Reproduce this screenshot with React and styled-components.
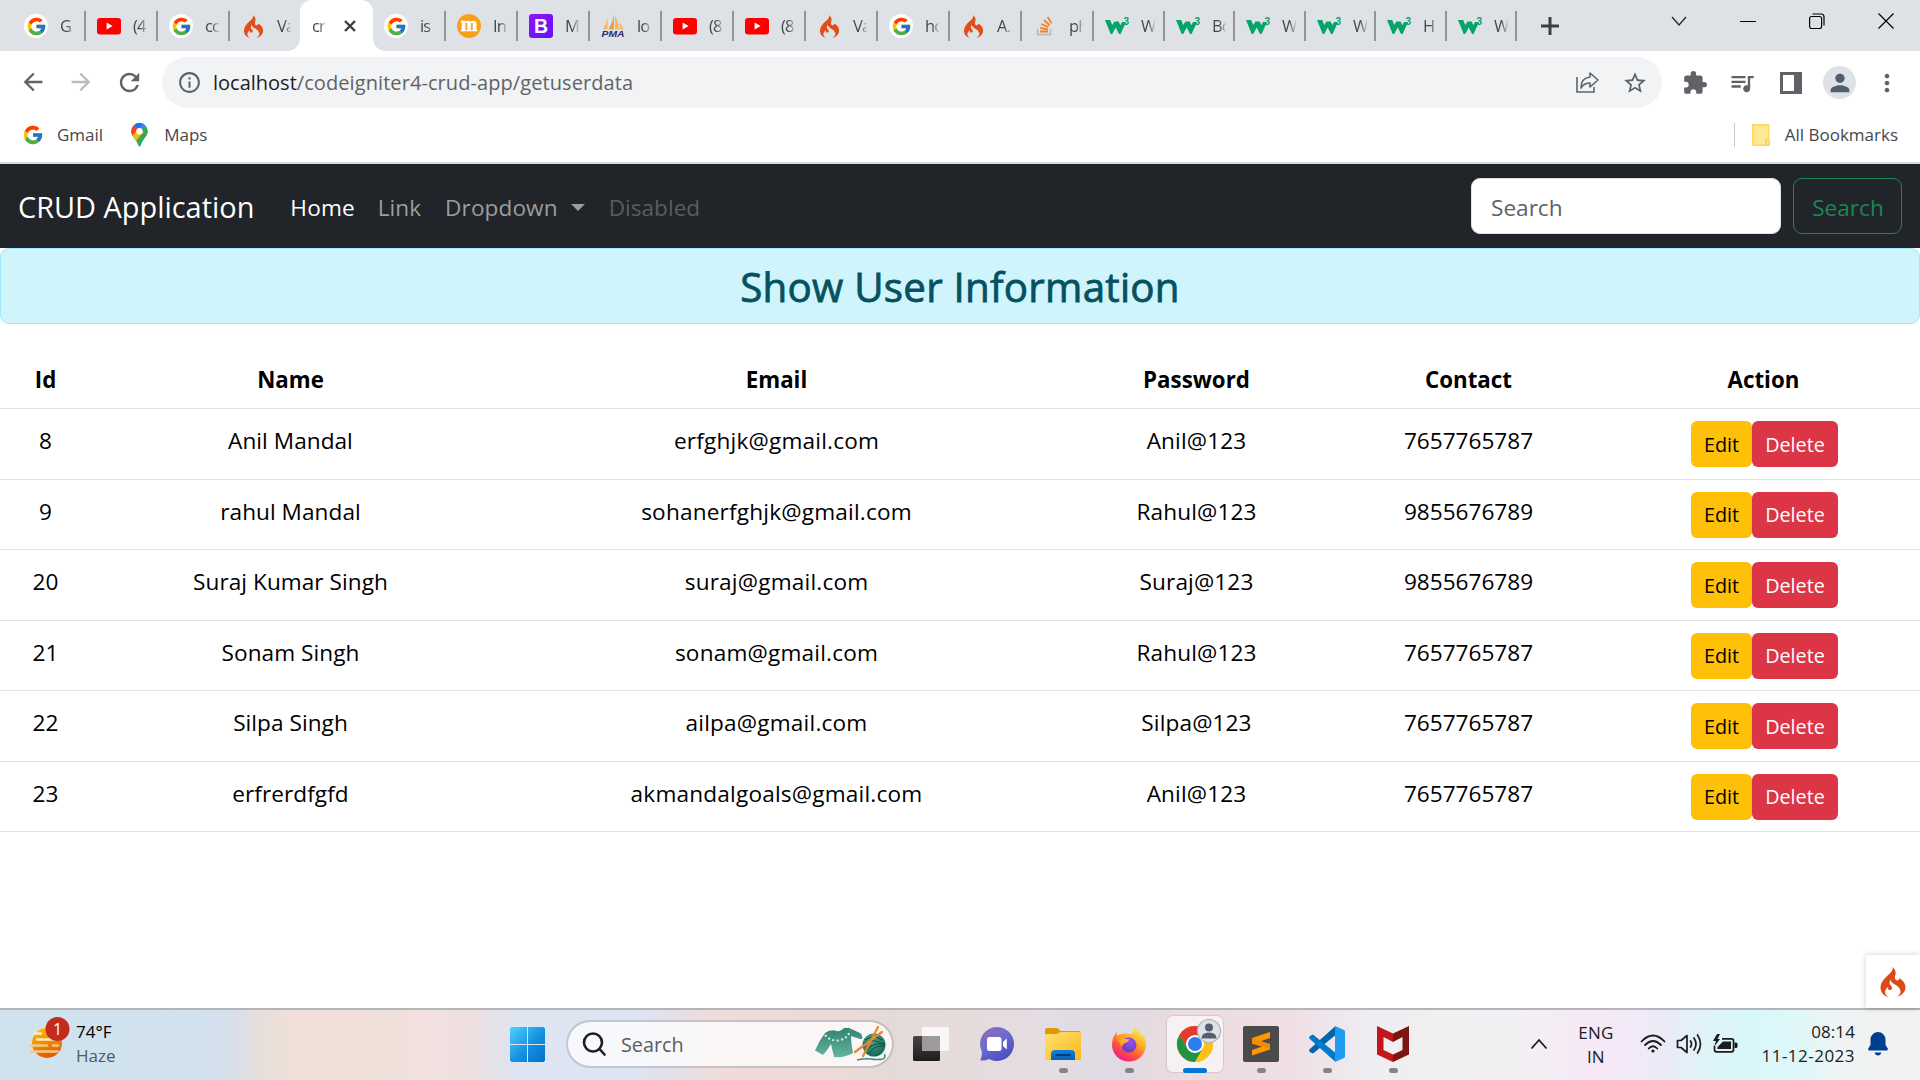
import React from "react";
import styled, { createGlobalStyle } from "styled-components";
import {
  MdArrowBack, MdArrowForward, MdRefresh, MdInfoOutline, MdStarBorder,
  MdExtension, MdQueueMusic, MdPerson, MdMoreVert,
} from "react-icons/md";
import { FcGoogle } from "react-icons/fc";
import { SiCodeigniter } from "react-icons/si";

const GlobalStyle = createGlobalStyle`
  * { box-sizing: border-box; }
  html, body { margin: 0; padding: 0; background: #fff; overflow: hidden; }
  body { font-family: "Open Sans", "Noto Sans", sans-serif; }
  svg { display: block; flex: none; }
`;

const Screen = styled.div`
  width: 1920px;
  height: 1080px;
  display: flex;
  flex-direction: column;
  overflow: hidden;
  background: #fff;
`;

const Label = styled.span`
  font-size: ${(p) => p.$size}px;
  font-weight: ${(p) => p.$weight || 400};
  letter-spacing: ${(p) => p.$track || 0}px;
  color: ${(p) => p.$color || "inherit"};
  margin-left: ${(p) => p.$ml || 0}px;
  padding-top: ${(p) => p.$drop || 0}px;
  white-space: pre;
`;

/* ---------- Tab strip ---------- */

const TabStrip = styled.div`
  height: 51px;
  flex: none;
  display: flex;
  background: #dee1e6;
  padding-left: 13px;
`;

const Tab = styled.div`
  width: ${(p) => p.$w}px;
  height: 51px;
  flex: none;
  display: flex;
  align-items: center;
  gap: 12px;
  padding: 1px 0 0 11px;
`;

const Divider = styled.i`
  width: 2px;
  height: 30px;
  margin-left: auto;
  background: #919499;
`;

const TabTitle = styled.span`
  width: 14px;
  overflow: hidden;
  white-space: nowrap;
  font-size: 16.5px;
  letter-spacing: -0.8px;
  line-height: 30px;
  color: #45484d;
  mask-image: linear-gradient(90deg, #000 50%, rgba(0, 0, 0, 0.15) 100%);
  margin-right: ${(p) => (p.$active ? -1 : -12)}px;
`;

const ActiveTab = styled.div`
  width: 73px;
  height: 51px;
  flex: none;
  display: flex;
  align-items: center;
  gap: 19px;
  margin-left: -2px;
  padding: 1px 0 0 12px;
  background: #fff;
  border-radius: 12px 12px 0 0;
  position: relative;
  &::before,
  &::after {
    content: "";
    position: absolute;
    bottom: 0;
    width: 12px;
    height: 12px;
  }
  &::before {
    left: -12px;
    background: radial-gradient(circle at 0 0, transparent 11.5px, #fff 12px);
  }
  &::after {
    right: -12px;
    background: radial-gradient(circle at 100% 0, transparent 11.5px, #fff 12px);
  }
`;

const NewTab = styled.div`
  display: flex;
  align-items: center;
  padding-left: 24px;
`;

const WindowButtons = styled.div`
  margin-left: auto;
  display: flex;
  height: 42px;
  align-items: center;
  gap: 53px;
  padding-right: 26px;
`;

const Disc = styled.div`
  width: 24px;
  height: 24px;
  flex: none;
  border-radius: 50%;
  background: #fff;
  display: flex;
  align-items: center;
  justify-content: center;
`;

const Slot = styled.div`
  width: 24px;
  height: 24px;
  flex: none;
  display: flex;
  align-items: center;
  justify-content: center;
`;

const YouTube = () => (
  <svg width="24" height="24" viewBox="0 0 24 24">
    <rect x="0" y="4" width="24" height="16.4" rx="3" fill="#f00" />
    <path d="M9.6 8.6v7l6-3.5z" fill="#fff" />
  </svg>
);
const Moodle = () => (
  <svg width="24" height="24" viewBox="0 0 24 24">
    <circle cx="12" cy="12" r="12" fill="#f9a01b" />
    <text x="12" y="17" textAnchor="middle" fontFamily="Liberation Serif, serif" fontWeight="700" fontSize="20" fill="#fff" stroke="#fff" strokeWidth=".6">m</text>
  </svg>
);
const Bootstrap = () => (
  <svg width="24" height="24" viewBox="0 0 24 24">
    <defs><linearGradient id="bs" x1="0" y1="0" x2="1" y2="1"><stop offset="0" stopColor="#9013fe" /><stop offset="1" stopColor="#6610f2" /></linearGradient></defs>
    <rect width="24" height="24" rx="3" fill="url(#bs)" />
    <text x="12" y="19" textAnchor="middle" fontFamily="Liberation Sans, sans-serif" fontWeight="700" fontSize="19.5" fill="#fff">B</text>
  </svg>
);
const PhpMyAdmin = () => (
  <svg width="24" height="24" viewBox="0 0 24 24">
    <path d="M2 15.500Q5.500 10 6.500 3v12z" fill="#f9b45c" />
    <path d="M7.500 15.300Q12 8 13 .5v15z" fill="#f89c2a" />
    <path d="M14 15.200V1q3 7 4.500 14.600zM18.500 8q2.500 3 4 8l-3-.5z" fill="#fbb55a" />
    <text x="12" y="22.700" textAnchor="middle" fontFamily="Liberation Sans, sans-serif" fontWeight="700" fontStyle="italic" fontSize="9" textLength="23" lengthAdjust="spacingAndGlyphs" fill="#2c2c6c">PMA</text>
  </svg>
);
const W3 = () => (
  <svg width="24" height="24" viewBox="0 0 24 24">
    <path d="M0 6h5.200l2 5 2.300-3.500h4.200l1.600 3.700 1.700-3.200h4L15.600 20h-1.500l-3.400-6.500-3.500 6.500H5.700z" fill="#04a36a" />
    <text x="21.300" y="10.500" textAnchor="middle" fontFamily="Liberation Sans, sans-serif" fontWeight="700" fontSize="10" fill="#04a36a">3</text>
  </svg>
);
const Google = () => <Disc><FcGoogle size={21} /></Disc>;
const Flame = () => <Slot><SiCodeigniter size={23} color="#e04e1c" /></Slot>;
const Stack = () => (
  <Slot>
    <svg width="18" height="20" viewBox="0 0 18 20" fill="none">
      <path d="M1.500 13v5.600h13V13" stroke="#bcbbbb" strokeWidth="1.800" />
      <path d="M4 15.500h8M4.200 12l7.800 1.400M5.300 8l7.200 3.200M8 4.200l5.800 5M11.600 1l4 6.200" stroke="#f48024" strokeWidth="1.800" />
    </svg>
  </Slot>
);

const tabIcons = { g: Google, y: YouTube, f: Flame, m: Moodle, b: Bootstrap, p: PhpMyAdmin, s: Stack, w: W3 };

const tabsBefore = [["g", "G", 73], ["y", "(4", 72], ["g", "co", 72], ["f", "Va", 72]];
const tabsAfter = [
  ["g", "is", 73], ["m", "In", 72], ["b", "M", 72], ["p", "lo", 72], ["y", "(8", 72], ["y", "(8", 72],
  ["f", "Va", 72], ["g", "ho", 72], ["f", "A.", 72], ["s", "ph", 72], ["w", "W", 71], ["w", "Bo", 70],
  ["w", "W", 71], ["w", "W", 70], ["w", "H", 71], ["w", "W", 70],
];

const BrowserTab = ({ icon, title, width, divided = true }) => {
  const Icon = tabIcons[icon];
  return (
    <Tab $w={width}>
      <Icon />
      <TabTitle>{title}</TabTitle>
      {divided && <Divider />}
    </Tab>
  );
};

/* ---------- Toolbar ---------- */

const Toolbar = styled.div`
  height: 63px;
  flex: none;
  display: flex;
  align-items: center;
  padding-left: 19px;
  color: #5f6368;
`;

const NavIcons = styled.div`
  display: flex;
  width: 143px;
  gap: 20px;
`;

const Omnibox = styled.div`
  width: 1500px;
  height: 51px;
  border-radius: 26px;
  background: #f1f3f4;
  display: flex;
  align-items: center;
  padding: 0 14px 0 15px;
`;

const OmniActions = styled.div`
  margin-left: auto;
  display: flex;
  gap: 22px;
  align-items: center;
`;

const Extensions = styled.div`
  display: flex;
  align-items: center;
  margin-left: 20px;
`;

const SidePanelIcon = styled.svg`
  margin: 0 21px 0 24px;
`;

const Playlist = styled(MdQueueMusic)`
  margin-left: 20px;
`;

const Avatar = styled.div`
  width: 33px;
  height: 33px;
  margin-right: 17px;
  border-radius: 50%;
  background: #dee1e6;
  display: flex;
  align-items: center;
  justify-content: center;
`;

const BookmarkBar = styled.div`
  height: 50px;
  flex: none;
  display: flex;
  align-items: center;
  padding: 0 22px 7px 22px;
  border-bottom: 2px solid #dadce0;
  color: #45484d;
`;

const Bookmark = styled.div`
  display: flex;
  align-items: center;
  gap: ${(p) => p.$gap || 13}px;
  margin-right: 28px;
  &:last-child { margin-right: 0; }
`;

const BookmarkDivider = styled.i`
  width: 1px;
  height: 24px;
  background: #c8cacd;
  margin: 0 17px 0 auto;
`;

const MapsPin = () => (
  <svg width="17" height="24" viewBox="0 0 17 24">
    <defs><clipPath id="pin"><path d="M8.5 0a8.3 8.3 0 0 1 8.3 8.3c0 5-5.3 7.700-7.100 14.200q-.3 1.100-1.200 1.100t-1.200-1.100C5.500 16 .2 13.300.2 8.300A8.300 8.300 0 0 1 8.500 0z" /></clipPath></defs>
    <g clipPath="url(#pin)">
      <rect width="17" height="24" fill="#34a853" />
      <path d="M3 2 8.500 8.500 15 0H3z" fill="#1a73e8" />
      <path d="M-1 0 3 2.300 8 7 2 14-2 14z" fill="#ea4335" />
      <path d="M1 13 8.500 4.500 12.500 9 4.500 18.500z" fill="#fbbc04" />
      <path d="M8.500 8.500 11 0h7L11.500 6z" fill="#4285f4" />
    </g>
    <circle cx="8.500" cy="8.300" r="3.200" fill="#fff" />
  </svg>
);

/* ---------- Page ---------- */

const Page = styled.main`
  height: 844px;
  flex: none;
  position: relative;
  background: #fff;
`;

const Navbar = styled.nav`
  height: 84px;
  display: flex;
  align-items: center;
  background: #212529;
  padding: 0 18px;
`;

const Caret = styled.i`
  margin: 2px 0 0 13px;
  border-top: 7.5px solid #9b9d9e;
  border-left: 7.5px solid transparent;
  border-right: 7.5px solid transparent;
`;

const SearchForm = styled.form`
  margin-left: auto;
  display: flex;
  gap: 12px;
`;

const SearchField = styled.div`
  width: 310px;
  height: 56px;
  border-radius: 9px;
  border: 1px solid #dee2e6;
  background: #fff;
  display: flex;
  align-items: center;
  padding-left: 19px;
`;

const SearchButton = styled.button`
  width: 109px;
  height: 56px;
  border-radius: 9px;
  border: 1px solid #198754;
  background: transparent;
  padding: 2px 0 0 1px;
  font-family: inherit;
`;

const Alert = styled.div`
  height: 76px;
  margin-bottom: 24px;
  display: flex;
  justify-content: center;
  align-items: center;
  padding-top: 1px;
  background: #cff4fc;
  border: 1px solid #9eeaf9;
  border-radius: 9px;
`;

const Heading = styled.h3`
  margin: 0;
  font-size: 40.3px;
  font-weight: 400;
  letter-spacing: 0.25px;
  color: #055160;
  -webkit-text-stroke: 0.8px #055160;
`;

const Row = styled.div`
  height: ${(p) => (p.$head ? 61 : 70.5)}px;
  display: grid;
  grid-template-columns: 90px 400px 572px 268px 276px 314px;
  border-bottom: 1px solid #dee2e6;
  color: #000;
`;

const Cell = styled.div`
  padding-top: ${(p) => (p.$action ? 12 : 14)}px;
  padding-left: ${(p) => (p.$action ? 3 : 1)}px;
  display: flex;
  justify-content: center;
  align-items: flex-start;
  line-height: 36px;
`;

const ActionButton = styled.button`
  width: ${(p) => (p.$danger ? 86 : 61)}px;
  height: 46px;
  border: 0;
  border-radius: 6px;
  padding: 0;
  font-family: inherit;
  background: ${(p) => (p.$danger ? "#dc3545" : "#ffc107")};
  color: ${(p) => (p.$danger ? "#fff" : "#000")};
`;

const DebugBar = styled.div`
  position: absolute;
  right: 0;
  bottom: 0;
  width: 54px;
  height: 53px;
  background: #fff;
  box-shadow: 0 0 6px rgba(0, 0, 0, 0.2);
  display: flex;
  align-items: center;
  justify-content: center;
`;

const tracking = [0, 0.05, 0.19, 0.13, 0];

const rows = [
  ["8", "Anil Mandal", "erfghjk@gmail.com", "Anil@123", "7657765787"],
  ["9", "rahul Mandal", "sohanerfghjk@gmail.com", "Rahul@123", "9855676789"],
  ["20", "Suraj Kumar Singh", "suraj@gmail.com", "Suraj@123", "9855676789"],
  ["21", "Sonam Singh", "sonam@gmail.com", "Rahul@123", "7657765787"],
  ["22", "Silpa Singh", "ailpa@gmail.com", "Silpa@123", "7657765787"],
  ["23", "erfrerdfgfd", "akmandalgoals@gmail.com", "Anil@123", "7657765787"],
];

/* ---------- Taskbar ---------- */

const Taskbar = styled.footer`
  height: 72px;
  flex: none;
  display: flex;
  border-top: 2px solid #b4b5b8;
  background: linear-gradient(90deg, #cfe2ee 0, #d2e2ef 200px, #d7dfec 230px, #e8dedb 262px, #efdfd8 290px,
    #efe0d9 380px, #f2e0df 420px, #efe0e1 470px, #e3e2ea 500px, #dfe5f2 520px, #dde4f1 640px, #e4dfe6 680px,
    #efdcda 720px, #eddad8 830px, #e3dad9 900px, #e5dcdb 960px, #e4dde2 1050px, #dfdae4 1120px, #ebdcdf 1180px,
    #efdfe4 1290px, #eeedf3 1370px, #f0f0f0 1440px, #f3eff3 1530px, #f6e8f7 1600px, #ecebf7 1660px,
    #e0f2f8 1700px, #d8f8fb 1750px, #e0f7f8 1800px, #eff3f3 1840px, #f2f2f2 1920px);
`;

const Weather = styled.div`
  width: 510px;
  display: flex;
  padding: 6px 0 0 29px;
  gap: 5px;
`;

const Stacked = styled.div`
  display: flex;
  flex-direction: column;
  align-items: ${(p) => p.$align || "flex-start"};
  line-height: 24px;
  margin-left: ${(p) => p.$ml || 0}px;
  padding-top: ${(p) => p.$drop || 0}px;
`;

const Apps = styled.div`
  display: flex;
  align-items: center;
  height: 68px;
`;

const TaskSearch = styled.div`
  width: 328px;
  height: 48px;
  margin: 0 4px 0 21px;
  border-radius: 24px;
  border: 2px solid rgba(90, 90, 110, 0.22);
  background: rgba(255, 255, 255, 0.75);
  background-clip: padding-box;
  display: flex;
  align-items: center;
  padding: 0 4px 0 14px;
`;

const SearchArt = styled.svg`
  margin-left: auto;
`;

const AppTile = styled.div`
  width: 56px;
  height: 56px;
  margin: 0 5px;
  border-radius: 6px;
  background: ${(p) => (p.$active ? "rgba(255,255,255,.6)" : "transparent")};
  box-shadow: ${(p) => (p.$active ? "0 0 1px 1px rgba(120,100,110,.18)" : "none")};
  display: flex;
  flex-direction: column;
  align-items: center;
  padding-top: 10px;
`;

const Running = styled.i`
  width: ${(p) => (p.$active ? 24 : 9)}px;
  height: 5px;
  margin-top: 6px;
  flex: none;
  border-radius: 3px;
  background: ${(p) => (p.$active ? "#0078d4" : "#868385")};
`;

const Tray = styled.div`
  margin-left: auto;
  display: flex;
  align-items: center;
  height: 68px;
  padding-right: 32px;
  color: #1b1b1b;
`;

const TrayIcons = styled.div`
  display: flex;
  align-items: center;
  gap: 10px;
  margin: 0 23px 0 27px;
`;

const BellIcon = styled.svg`
  margin-left: 13px;
`;

const HazeIcon = () => (
  <svg width="42" height="46" viewBox="0 0 42 46">
    <defs><linearGradient id="sun" x1="0" y1="0" x2="0.3" y2="1"><stop offset="0" stopColor="#fdc50a" /><stop offset="1" stopColor="#e65c05" /></linearGradient></defs>
    <circle cx="18" cy="27" r="15" fill="url(#sun)" />
    <g strokeLinecap="round" strokeWidth="2.500" stroke="#fff0b8">
      <path d="M6 17.500h6M8 23.500h22" /><path d="M2 29.500h16M24 29.500h5M1.500 35.500h27" stroke="#f0cb85" />
    </g>
    <circle cx="28.500" cy="13" r="12" fill="#c42b1c" />
    <text x="28.500" y="18.500" textAnchor="middle" fontSize="16" fontFamily="Open Sans, sans-serif" fill="#fff">1</text>
  </svg>
);

const StartIcon = () => (
  <svg width="35" height="35" viewBox="0 0 35 35">
    <defs><linearGradient id="win" x1="0" y1="0" x2="1" y2="1"><stop offset="0" stopColor="#4fd1ff" /><stop offset=".55" stopColor="#1590e0" /><stop offset="1" stopColor="#0070cc" /></linearGradient></defs>
    <path fill="url(#win)" d="M1.500 0H17v17H0V1.500zM18 0h15.500L35 1.500V17H18zM0 18h17v17H1.500L0 33.500zM18 18h17v15.500L33.500 35H18z" />
  </svg>
);

const Knitting = () => (
  <SearchArt width="74" height="38" viewBox="0 0 74 38">
    <defs>
      <linearGradient id="knit" x1="0" y1="0" x2="0" y2="1"><stop offset="0" stopColor="#2f8472" /><stop offset="1" stopColor="#63b49c" /></linearGradient>
      <radialGradient id="yarn" cx=".4" cy=".3" r=".8"><stop offset="0" stopColor="#47a58c" /><stop offset="1" stopColor="#155f51" /></radialGradient>
    </defs>
    <path d="M11 8Q16 4 23 6q4 1 7-3l5 0 11 5q3 2 2 6h-2l-9-3q0 8 2 17-8 5-19 4l-3-13Q13 26 9 30L1 25.500Q5 16 11 8z" fill="url(#knit)" />
    <path d="M11 10q5 6 13 5.500 10-1.500 12-10" fill="none" stroke="#d8efe8" strokeWidth="2" strokeDasharray="2 2.400" />
    <circle cx="60" cy="20" r="11.500" fill="url(#yarn)" />
    <path d="M51 15q9-6 17 0M49 19q10-7 22 1M52 26q6-9 18-7M55 29q4-9 15-8" stroke="#0f5145" fill="none" />
    <path d="M43 35q8-2 14-1t12 0q3-2 1.500-5" stroke="#3c8f7e" strokeWidth="1.500" fill="none" />
    <path d="M41 27 68 7M49 31 64 2" stroke="#e9852b" strokeWidth="2.200" strokeLinecap="round" />
  </SearchArt>
);

const TaskView = () => (
  <svg width="36" height="36" viewBox="0 0 36 36">
    <defs><linearGradient id="tv" x1="0" y1="0" x2="0" y2="1"><stop offset="0" stopColor="#4a4644" /><stop offset="1" stopColor="#1d1b1b" /></linearGradient></defs>
    <rect x="0" y="10" width="27" height="25" rx="1.500" fill="url(#tv)" />
    <rect x="9" y="1" width="27" height="24" rx="1.500" fill="#fff" fillOpacity=".75" />
    <rect x="9" y="10" width="18" height="15" fill="#9c9a9a" />
  </svg>
);

const ChatIcon = () => (
  <svg width="36" height="36" viewBox="0 0 36 36">
    <defs><linearGradient id="chat" x1="0" y1="0" x2=".6" y2="1"><stop offset="0" stopColor="#9468b4" /><stop offset=".5" stopColor="#6d6cd0" /><stop offset="1" stopColor="#4a50c0" /></linearGradient></defs>
    <path d="M18 1a17 17 0 1 1-8 32q-4 2-8.600 1.500Q3 30 3 26A17 17 0 0 1 18 1z" fill="url(#chat)" />
    <rect x="8" y="11" width="14.500" height="14" rx="2.500" fill="#fff" />
    <path d="M24 16l3.800-3.500v11L24 20z" fill="#fff" />
  </svg>
);

const FolderIcon = () => (
  <svg width="36" height="36" viewBox="0 0 36 36">
    <defs><linearGradient id="fold" x1="0" y1="0" x2="1" y2="1"><stop offset="0" stopColor="#ffe070" /><stop offset="1" stopColor="#fcb81c" /></linearGradient>
      <linearGradient id="pocket" x1="0" y1="0" x2="0" y2="1"><stop offset="0" stopColor="#0c84d8" /><stop offset="1" stopColor="#0c5cb0" /></linearGradient></defs>
    <path d="M0 4q0-2 2-2h10.500l3 3H34q2 0 2 2v5H0z" fill="#dd9c06" />
    <path d="M0 8h12l3.500-2H36v26.500q0 1.500-1.500 1.500H1.500Q0 34 0 32.500z" fill="url(#fold)" />
    <path d="M6 34v-6q0-4 4-4h16q4 0 4 4v6z" fill="url(#pocket)" />
    <path d="M11 29h14" stroke="#063e7c" strokeWidth="1.800" strokeLinecap="round" />
  </svg>
);

const FirefoxIcon = () => (
  <svg width="36" height="36" viewBox="0 0 36 36">
    <defs>
      <linearGradient id="fx" x1=".85" y1=".05" x2=".25" y2="1"><stop offset="0" stopColor="#fff23f" /><stop offset=".35" stopColor="#ffb028" /><stop offset=".65" stopColor="#ff5a36" /><stop offset="1" stopColor="#f0148c" /></linearGradient>
      <radialGradient id="fxb" cx=".6" cy=".3" r=".8"><stop offset="0" stopColor="#9a4df0" /><stop offset="1" stopColor="#5a3fb8" /></radialGradient>
      <linearGradient id="fxh" x1="0" y1="0" x2="1" y2=".3"><stop offset="0" stopColor="#ff8a1e" /><stop offset="1" stopColor="#ffbf2a" /></linearGradient>
    </defs>
    <path d="M23 1q5 3 6 8 1.500 0 2-1.500 4 5 4 11.500a17 16.500 0 0 1-34 0q0-8 5-13v4q2-2 5-2 3-1.500 8 0 3 0 3.500-3 0-2 .5-4z" fill="url(#fx)" />
    <circle cx="18" cy="19" r="7.500" fill="url(#fxb)" />
    <path d="M5 12q3-4 7-3l1.500 3.500q3 1 5 .5-1 3-4.500 4-3 1.500-3 4.500-2-6-6-9.500z" fill="url(#fxh)" />
  </svg>
);

const ChromeIcon = () => (
  <svg width="48" height="36" viewBox="0 0 48 36" overflow="visible">
    <g transform="translate(6 0)">
      <circle cx="18" cy="18" r="18" fill="#fbc116" />
      <path d="M2.400 9A18 18 0 0 1 33.600 9H18L10.200 22.500z" fill="#e33b2e" />
      <path d="M2.400 9A18 18 0 0 0 18 36L25.800 22.500 10.200 22.500z" fill="#229342" />
      <path d="M33.600 9A18 18 0 0 1 18 36L25.800 22.500 18 9z" fill="#fbc116" />
      <circle cx="18" cy="18" r="9" fill="#fff" />
      <circle cx="18" cy="18" r="7" fill="#2c7df0" />
    </g>
    <circle cx="38" cy="5" r="11.500" fill="#dfe2e7" stroke="#aeb0b3" strokeWidth="1.200" />
    <circle cx="38" cy="1.500" r="4" fill="#55606f" />
    <path d="M30.500 12.500q0-6 7.500-6t7.500 6z" fill="#55606f" />
  </svg>
);

const SublimeIcon = () => (
  <svg width="36" height="36" viewBox="0 0 36 36">
    <rect width="36" height="36" rx="2" fill="#4a4a4a" />
    <path d="M9 12 27 6v6l-11 3.700L27 18v5.500L9 29.500V24l11-3.700L9 17.500z" fill="#ff9800" />
    <path d="M9 12v5.500l18 6V18z" fill="#f58d00" />
  </svg>
);

const VsCodeIcon = () => (
  <svg width="36" height="36" viewBox="0 0 36 36">
    <path d="M26 9.500 4 27.500 0.800 26q-1.300-1.500 0-3L26 0.500z" fill="#0065a9" />
    <path d="M26 26.500 4 8.500.8 10q-1.300 1.500 0 3L26 35.500z" fill="#007acc" />
    <path d="M26 0l9 4q1 .5 1 1.800v24.400q0 1.300-1 1.800l-9 4z" fill="#1f9cf0" />
  </svg>
);

const McAfeeIcon = () => (
  <svg width="32" height="36" viewBox="0 0 32 36">
    <path d="M0 0 16 7.500V16L6.500 11v13L16 28.500V36L0 28.500z" fill="#c01818" />
    <path d="M32 0 16 7.500V16l9.500-5v13L16 28.500V36l16-7.500z" fill="#7d1510" />
  </svg>
);

export default function App() {
  return (
    <Screen>
      <GlobalStyle />
      <TabStrip>
        {tabsBefore.map(([i, t, w], n) => (
          <BrowserTab key={n} icon={i} title={t} width={w} divided={n < 3} />
        ))}
        <ActiveTab>
          <TabTitle $active>cr</TabTitle>
          <svg width="12" height="12" viewBox="0 0 12 12"><path d="M1 1l10 10M11 1 1 11" stroke="#3c4043" strokeWidth="2.400" /></svg>
        </ActiveTab>
        {tabsAfter.map(([i, t, w], n) => <BrowserTab key={n} icon={i} title={t} width={w} />)}
        <NewTab>
          <svg width="18" height="18" viewBox="0 0 18 18"><path d="M9 0v18M0 9h18" stroke="#3c4043" strokeWidth="3" /></svg>
        </NewTab>
        <WindowButtons>
          <svg width="16" height="16" viewBox="0 0 16 16"><path d="M1 4l7 8 7-8" fill="none" stroke="#222" strokeWidth="1.200" /></svg>
          <svg width="16" height="16" viewBox="0 0 16 16"><path d="M0 8.500h16" stroke="#000" /></svg>
          <svg width="16" height="16" viewBox="0 0 16 16" fill="none" stroke="#000" strokeWidth="1.200"><rect x=".6" y="3.500" width="12" height="12" rx="2" /><path d="M3.500 1h8.500q3 0 3 3v8.500" /></svg>
          <svg width="16" height="16" viewBox="0 0 16 16"><path d="M.5.500l15 15M15.500.500l-15 15" stroke="#000" strokeWidth="1.200" /></svg>
        </WindowButtons>
      </TabStrip>

      <Toolbar>
        <NavIcons>
          <MdArrowBack size={28} /><MdArrowForward size={28} color="#babcbe" /><MdRefresh size={29} />
        </NavIcons>
        <Omnibox>
          <MdInfoOutline size={25} />
          <Label $size={20} $ml={11} $color="#202124">localhost</Label>
          <Label $size={20} $track={0.08} $color="#5f6368">/codeigniter4-crud-app/getuserdata</Label>
          <OmniActions>
            <svg width="25" height="23" viewBox="0 0 25 23" fill="none" stroke="#5f6368" strokeWidth="1.600"><path d="M2 6v15h17v-5" /><path d="M15 2l8 7-8 7v-4q-6 0-9 5 0-10 9-11z" strokeLinejoin="round" /></svg>
            <MdStarBorder size={26} />
          </OmniActions>
        </Omnibox>
        <Extensions>
          <MdExtension size={26} />
          <Playlist size={28} />
          <SidePanelIcon width="22" height="22" viewBox="0 0 22 22"><path d="M0 0h22v22H0zM3 3v16h11V3z" fill="#5f6368" fillRule="evenodd" /></SidePanelIcon>
          <Avatar><MdPerson size={28} color="#525e70" /></Avatar>
          <MdMoreVert size={28} />
        </Extensions>
      </Toolbar>

      <BookmarkBar>
        <Bookmark>
          <FcGoogle size={22} />
          <Label $size={17}>Gmail</Label>
        </Bookmark>
        <Bookmark $gap={16}>
          <MapsPin />
          <Label $size={17}>Maps</Label>
        </Bookmark>
        <BookmarkDivider />
        <Bookmark $gap={15}>
          <svg width="18" height="22" viewBox="0 0 18 22"><path d="M.7.700h16v14.500h-2.500v6H.7z" fill="#ffe793" stroke="#fdd663" strokeWidth="1.400" /><path d="M14.200 21.300v-5q0-1.500 1.500-1.500t1.500 1.500v5z" fill="#ffe793" stroke="#f2c94c" /></svg>
          <Label $size={17}>All Bookmarks</Label>
        </Bookmark>
      </BookmarkBar>

      <Page>
        <Navbar>
          <Label $size={28.9} $drop={1} $color="#fff">CRUD Application</Label>
          <Label $size={22.600} $ml={36} $drop={2} $track={0.15} $color="#fff">Home</Label>
          <Label $size={22.600} $ml={23} $drop={2} $color="#9b9d9e">Link</Label>
          <Label $size={22.600} $ml={24} $drop={2} $track={0.1} $color="#9b9d9e">Dropdown</Label>
          <Caret />
          <Label $size={22.600} $ml={24} $drop={2} $color="#595c5f">Disabled</Label>
          <SearchForm>
            <SearchField><Label $size={22.600} $drop={2} $color="#5d6166">Search</Label></SearchField>
            <SearchButton type="button"><Label $size={22.600} $color="#198754">Search</Label></SearchButton>
          </SearchForm>
        </Navbar>
        <Alert><Heading>Show User Information</Heading></Alert>
        <Row $head>
          {["Id", "Name", "Email", "Password", "Contact", "Action"].map((h) => (
            <Cell key={h}><Label $size={22.300} $weight={700}>{h}</Label></Cell>
          ))}
        </Row>
        {rows.map((r) => (
          <Row key={r[0]}>
            {r.map((v, i) => <Cell key={i}><Label $size={22.600} $track={tracking[i]}>{v}</Label></Cell>)}
            <Cell $action>
              <ActionButton><Label $size={19.800}>Edit</Label></ActionButton>
              <ActionButton $danger><Label $size={19.800}>Delete</Label></ActionButton>
            </Cell>
          </Row>
        ))}
        <DebugBar><SiCodeigniter size={30} color="#dd4814" /></DebugBar>
      </Page>

      <Taskbar>
        <Weather>
          <HazeIcon />
          <Stacked $drop={4}>
            <Label $size={17}>74°F</Label>
            <Label $size={17} $color="#4f5a62">Haze</Label>
          </Stacked>
        </Weather>
        <Apps>
          <StartIcon />
          <TaskSearch>
            <svg width="24" height="24" viewBox="0 0 24 24" fill="none" stroke="#1f1f1f" strokeWidth="2.600" strokeLinecap="round"><circle cx="11" cy="10.500" r="9" /><path d="M17.500 17l5 5.500" /></svg>
            <Label $size={19.800} $ml={15} $color="#5c5c5e">Search</Label>
            <Knitting />
          </TaskSearch>
          <AppTile><TaskView /></AppTile>
          <AppTile><ChatIcon /></AppTile>
          <AppTile><FolderIcon /><Running /></AppTile>
          <AppTile><FirefoxIcon /><Running /></AppTile>
          <AppTile $active><ChromeIcon /><Running $active /></AppTile>
          <AppTile><SublimeIcon /><Running /></AppTile>
          <AppTile><VsCodeIcon /><Running /></AppTile>
          <AppTile><McAfeeIcon /><Running /></AppTile>
        </Apps>
        <Tray>
          <svg width="18" height="12" viewBox="0 0 18 12"><path d="M1.500 10.500 9 2l7.500 8.500" fill="none" stroke="#1b1b1b" strokeWidth="1.800" /></svg>
          <Stacked $align="center" $ml={30} $drop={2}><Label $size={17} $track={0.2}>ENG</Label><Label $size={17}>IN</Label></Stacked>
          <TrayIcons>
            <svg width="26" height="20" viewBox="0 0 26 20" fill="none" stroke="#1b1b1b" strokeWidth="1.800" strokeLinecap="round"><path d="M1.500 7.500q11.500-12 23 0M5 11q8-8 16 0M8.700 14.500q4.300-4.500 8.600 0" /><circle cx="13" cy="17" r="1.600" fill="#1b1b1b" stroke="none" /></svg>
            <svg width="26" height="22" viewBox="0 0 26 22" fill="none" stroke="#1b1b1b" strokeWidth="1.700" strokeLinecap="round" strokeLinejoin="round"><path d="M1.500 7.500v7H5l6 5v-17l-6 5zM14.500 8q2 3 0 6M18 5q4 6 0 12M21.500 2q6 9 0 18" /></svg>
            <svg width="26" height="20" viewBox="0 0 26 20"><path d="M10 4.800h9.500q2 0 2 2v9q0 2-2 2H4.500q-2 0-2-2V12" fill="none" stroke="#1b1b1b" strokeWidth="1.700" /><path d="M11 7.500h8v7.500H5.500v-2zM22.500 8.500H24q1.500 0 1.500 1.500v2.500q0 1.500-1.500 1.500h-1.500zM5 0 1 7h3l-2 6 6-8H5.500L8 0z" fill="#1b1b1b" /></svg>
          </TrayIcons>
          <Stacked $align="flex-end"><Label $size={17} $track={0.1}>08:14</Label><Label $size={17} $track={0.48}>11-12-2023</Label></Stacked>
          <BellIcon width="20" height="24" viewBox="0 0 20 24"><path d="M10 0a7.500 7.500 0 0 1 7.500 7.500V13l2.300 3.500q.5 2-1.500 2H1.700q-2 0-1.500-2L2.500 13V7.500A7.500 7.500 0 0 1 10 0zM6.500 20.500h7q-1 3-3.500 3t-3.500-3z" fill="#003e92" /></BellIcon>
        </Tray>
      </Taskbar>
    </Screen>
  );
}
